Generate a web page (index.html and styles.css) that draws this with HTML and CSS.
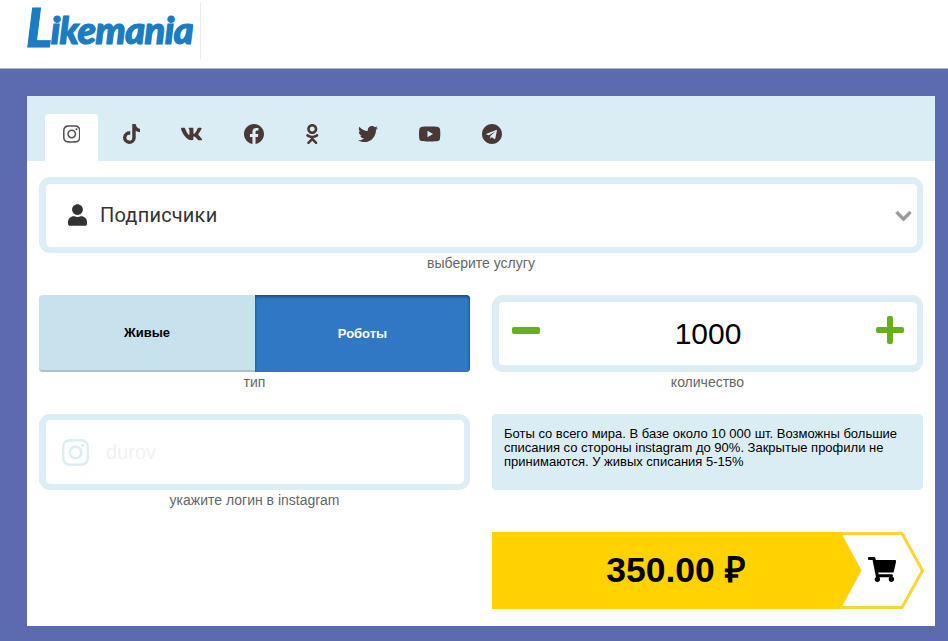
FILE: index.html
```html
<!DOCTYPE html>
<html lang="ru">
<head>
<meta charset="utf-8">
<title>Likemania</title>
<link rel="stylesheet" href="styles.css">
</head>
<body>
<header class="header">
  <div class="logo"><span class="logo-l">L</span>ikemania</div>
</header>
<main class="page">
  <section class="card">
    <nav class="tabs">
      <a class="tab tab-active"><svg class="icon" viewBox="0 0 448 512"><path d="M224.1 141c-63.6 0-114.9 51.3-114.9 114.9s51.3 114.9 114.9 114.9S339 319.5 339 255.9 287.7 141 224.1 141zm0 189.6c-41.1 0-74.7-33.5-74.7-74.7s33.5-74.7 74.7-74.7 74.7 33.5 74.7 74.7-33.6 74.7-74.7 74.7zm146.4-194.3c0 14.9-12 26.8-26.8 26.8-14.9 0-26.8-12-26.8-26.8s12-26.8 26.8-26.8 26.8 12 26.8 26.8zm76.1 27.2c-1.7-35.9-9.9-67.7-36.2-93.9-26.2-26.2-58-34.4-93.9-36.2-37-2.1-147.9-2.1-184.9 0-35.8 1.7-67.6 9.9-93.9 36.1s-34.4 58-36.2 93.9c-2.1 37-2.1 147.9 0 184.9 1.7 35.9 9.9 67.7 36.2 93.9s58 34.4 93.9 36.2c37 2.1 147.9 2.1 184.9 0 35.9-1.7 67.7-9.9 93.9-36.2 26.2-26.2 34.4-58 36.2-93.9 2.1-37 2.1-147.8 0-184.8zM398.8 388c-7.8 19.6-22.9 34.7-42.6 42.6-29.5 11.7-99.5 9-132.1 9s-102.7 2.6-132.1-9c-19.6-7.8-34.7-22.9-42.6-42.6-11.7-29.5-9-99.5-9-132.1s-2.6-102.7 9-132.1c7.8-19.6 22.9-34.7 42.6-42.6 29.5-11.7 99.5-9 132.1-9s102.7-2.6 132.1 9c19.6 7.8 34.7 22.9 42.6 42.6 11.7 29.5 9 99.5 9 132.1s2.7 102.7-9 132.1z"/></svg></a>
      <a class="tab tab-tiktok"><svg class="icon" viewBox="0 0 448 512"><path d="M448,209.91a210.06,210.06,0,0,1-122.77-39.25V349.38A162.55,162.55,0,1,1,185,188.31V278.2a74.62,74.62,0,1,0,52.23,71.18V0l88,0a121.18,121.18,0,0,0,1.86,22.17h0A122.18,122.18,0,0,0,381,102.39a121.43,121.43,0,0,0,67,20.14Z"/></svg></a>
      <a class="tab"><svg class="icon icon-vk" viewBox="18 0 536 512"><path d="M545 117.7c3.7-12.5 0-21.7-17.8-21.7h-58.9c-15 0-21.9 7.9-25.6 18.7 0 0-29.4 72.2-71 119.1-13.5 13.5-19.6 17.8-27 17.8-3.7 0-9.2-4.3-9.2-16.8V117.7c0-15-4.2-21.7-16.6-21.7h-92.6c-9.4 0-15 7-15 13.5 0 14.2 21.2 17.5 23.4 57.4v86.8c0 19-3.4 22.5-10.9 22.5-20 0-68.6-73.4-97.4-157.4-5.8-16.3-11.5-22.8-26.6-22.8H38.8c-16.8 0-20.2 7.9-20.2 16.7 0 15.6 20 93.1 93.1 195.5C160.4 378.1 229 416 291.4 416c37.5 0 42.1-8.4 42.1-22.9 0-66.8-3.4-73.1 15.4-73.1 8.7 0 23.7 4.4 58.7 38.1 40 40 46.6 57.9 69 57.9h58.9c16.8 0 25.3-8.4 20.4-25-11.2-34.9-86.9-106.7-90.3-111.5-8.7-11.2-6.2-16.2 0-26.2.1-.1 72-101.3 79.4-135.6z"/></svg></a>
      <a class="tab"><svg class="icon" viewBox="8 8 496 496"><path d="M504 256C504 119 393 8 256 8S8 119 8 256c0 123.78 90.69 226.38 209.25 245V327.69h-63V256h63v-54.64c0-62.15 37-96.48 93.67-96.48 27.14 0 55.52 4.84 55.52 4.84v61h-31.28c-30.8 0-40.41 19.12-40.41 38.73V256h68.78l-11 71.69h-57.78V501C413.31 482.38 504 379.78 504 256z"/></svg></a>
      <a class="tab tab-ok"><svg class="icon" viewBox="0 0 320 512"><path d="M275.1 334c-27.4 17.4-65.1 24.3-90 26.9l20.9 20.6 76.3 76.3c27.9 28.6-17.5 73.3-45.7 45.7-19.1-19.4-47.1-47.4-76.3-76.6L84 503.4c-28.2 27.5-73.6-17.6-45.4-45.7 19.4-19.4 47.1-47.4 76.3-76.3l20.6-20.6c-24.6-2.6-62.9-9.1-90.6-26.9-32.6-21-46.9-33.3-34.3-59 7.4-14.6 27.7-26.9 54.6-5.7 0 0 36.3 28.9 94.9 28.9s94.9-28.9 94.9-28.9c26.9-21.1 47.1-8.9 54.6 5.7 12.4 25.7-1.9 38-34.5 59.1zM30.3 129.7C30.3 58 88.6 0 160 0s129.7 58 129.7 129.7c0 71.4-58.3 129.4-129.7 129.4s-129.7-58-129.7-129.4zm66 0c0 35.1 28.6 63.7 63.7 63.7s63.7-28.6 63.7-63.7c0-35.4-28.6-64-63.7-64s-63.7 28.6-63.7 64z"/></svg></a>
      <a class="tab"><svg class="icon" viewBox="0 0 512 512"><path d="M459.37 151.716c.325 4.548.325 9.097.325 13.645 0 138.72-105.583 298.558-298.558 298.558-59.452 0-114.68-17.219-161.137-47.106 8.447.974 16.568 1.299 25.34 1.299 49.055 0 94.213-16.568 130.274-44.832-46.132-.975-84.792-31.188-98.112-72.772 6.498.974 12.995 1.624 19.818 1.624 9.421 0 18.843-1.3 27.614-3.573-48.081-9.747-84.143-51.98-84.143-102.985v-1.299c13.969 7.797 30.214 12.67 47.431 13.319-28.264-18.843-46.781-51.005-46.781-87.391 0-19.492 5.197-37.36 14.294-52.954 51.655 63.675 129.3 105.258 216.365 109.807-1.624-7.797-2.599-15.918-2.599-24.04 0-57.828 46.782-104.934 104.934-104.934 30.213 0 57.502 12.67 76.67 33.137 23.715-4.548 46.456-13.32 66.599-25.34-7.798 24.366-24.366 44.833-46.132 57.827 21.117-2.273 41.584-8.122 60.426-16.243-14.292 20.791-32.161 39.308-52.628 54.253z"/></svg></a>
      <a class="tab"><svg class="icon" viewBox="15 0 546 512"><path d="M549.655 124.083c-6.281-23.65-24.787-42.276-48.284-48.597C458.781 64 288 64 288 64S117.22 64 74.629 75.486c-23.497 6.322-42.003 24.947-48.284 48.597-11.412 42.867-11.412 132.305-11.412 132.305s0 89.438 11.412 132.305c6.281 23.65 24.787 41.5 48.284 47.821C117.22 448 288 448 288 448s170.78 0 213.371-11.486c23.497-6.321 42.003-24.171 48.284-47.821 11.412-42.867 11.412-132.305 11.412-132.305s0-89.438-11.412-132.305zm-317.51 213.508V175.185l142.739 81.205-142.739 81.201z"/></svg></a>
      <a class="tab"><svg class="icon" viewBox="0 8 496 496"><path d="M248 8C111 8 0 119 0 256s111 248 248 248 248-111 248-248S385 8 248 8zm121.8 169.9l-40.7 191.8c-3 13.6-11.1 16.9-22.4 10.5l-62-45.7-29.9 28.8c-3.3 3.3-6.1 6.1-12.5 6.1l4.4-63.1 114.9-103.8c5-4.4-1.1-6.9-7.7-2.5l-142 89.4-61.2-19.1c-13.3-4.2-13.6-13.3 2.8-19.7l239.1-92.2c11.1-4 20.8 2.7 17.2 19.5z"/></svg></a>
    </nav>
    <div class="form">
      <div class="field field-wide">
        <div class="box select">
          <svg class="icon-user" viewBox="0 0 448 512"><path d="M224 256c70.7 0 128-57.3 128-128S294.7 0 224 0 96 57.3 96 128s57.3 128 128 128zm89.6 32h-16.7c-22.2 10.2-46.9 16-72.9 16s-50.6-5.8-72.9-16h-16.7C60.2 288 0 348.2 0 422.4V464c0 26.5 21.5 48 48 48h352c26.5 0 48-21.5 48-48v-41.6c0-74.2-60.2-134.4-134.4-134.4z"/></svg>
          <span class="select-text">Подписчики</span>
          <svg class="icon-chevron" viewBox="-20 100 488 310"><path d="M207.029 381.476L12.686 187.132c-9.373-9.373-9.373-24.569 0-33.941l22.667-22.667c9.357-9.357 24.522-9.375 33.901-.04L224 284.505l154.745-154.021c9.379-9.335 24.544-9.317 33.901.04l22.667 22.667c9.373 9.373 9.373 24.569 0 33.941L240.971 381.476c-9.373 9.372-24.569 9.372-33.942 0z"/></svg>
        </div>
        <div class="hint">выберите услугу</div>
      </div>
      <div class="field">
        <div class="toggle">
          <div class="toggle-item toggle-live">Живые</div>
          <div class="toggle-item toggle-bots">Роботы</div>
        </div>
        <div class="hint">тип</div>
      </div>
      <div class="field">
        <div class="box stepper">
          <svg class="step-icon" viewBox="0 0 28 28"><rect x="0" y="11" width="28" height="7" rx="2"/></svg>
          <span class="step-value">1000</span>
          <svg class="step-icon" viewBox="0 0 28 28"><path d="M11 2a2 2 0 0 1 2-2h2a2 2 0 0 1 2 2v9h9a2 2 0 0 1 2 2v2a2 2 0 0 1-2 2h-9v9a2 2 0 0 1-2 2h-2a2 2 0 0 1-2-2v-9H2a2 2 0 0 1-2-2v-2a2 2 0 0 1 2-2h9z"/></svg>
        </div>
        <div class="hint">количество</div>
      </div>
      <div class="field">
        <div class="box login">
          <svg class="icon-login" viewBox="0 0 448 512"><path d="M224.1 141c-63.6 0-114.9 51.3-114.9 114.9s51.3 114.9 114.9 114.9S339 319.5 339 255.9 287.7 141 224.1 141zm0 189.6c-41.1 0-74.7-33.5-74.7-74.7s33.5-74.7 74.7-74.7 74.7 33.5 74.7 74.7-33.6 74.7-74.7 74.7zm146.4-194.3c0 14.9-12 26.8-26.8 26.8-14.9 0-26.8-12-26.8-26.8s12-26.8 26.8-26.8 26.8 12 26.8 26.8zm76.1 27.2c-1.7-35.9-9.9-67.7-36.2-93.9-26.2-26.2-58-34.4-93.9-36.2-37-2.1-147.9-2.1-184.9 0-35.8 1.7-67.6 9.9-93.9 36.1s-34.4 58-36.2 93.9c-2.1 37-2.1 147.9 0 184.9 1.7 35.9 9.9 67.7 36.2 93.9s58 34.4 93.9 36.2c37 2.1 147.9 2.1 184.9 0 35.9-1.7 67.7-9.9 93.9-36.2 26.2-26.2 34.4-58 36.2-93.9 2.1-37 2.1-147.8 0-184.8zM398.8 388c-7.8 19.6-22.9 34.7-42.6 42.6-29.5 11.7-99.5 9-132.1 9s-102.7 2.6-132.1-9c-19.6-7.8-34.7-22.9-42.6-42.6-11.7-29.5-9-99.5-9-132.1s-2.6-102.7 9-132.1c7.8-19.6 22.9-34.7 42.6-42.6 29.5-11.7 99.5-9 132.1-9s102.7-2.6 132.1 9c19.6 7.8 34.7 22.9 42.6 42.6 11.7 29.5 9 99.5 9 132.1s2.7 102.7-9 132.1z"/></svg>
          <span class="login-text">durov</span>
        </div>
        <div class="hint">укажите логин в instagram</div>
      </div>
      <div class="info">Боты со всего мира. В базе около 10 000 шт. Возможны большие списания со стороны instagram до 90%. Закрытые профили не принимаются. У живых списания 5-15%</div>
      <div class="buy">
        <div class="buy-price">350.00 ₽</div>
        <svg class="buy-cart" viewBox="0 0 92 77">
          <polygon class="buy-outline" points="8,1.5 70,1.5 90.5,38.5 70,75.5 8,75.5 28,38.5"/>
          <path transform="translate(36 25) scale(0.0488)" d="M528.12 301.319l47.273-208C578.806 78.301 567.391 64 551.99 64H159.208l-9.166-44.81C147.758 8.021 137.93 0 126.529 0H24C10.745 0 0 10.745 0 24v16c0 13.255 10.745 24 24 24h69.883l70.248 343.435C147.325 417.1 136 435.222 136 456c0 30.928 25.072 56 56 56s56-25.072 56-56c0-15.674-6.447-29.835-16.824-40h209.647C430.447 426.165 424 440.326 424 456c0 30.928 25.072 56 56 56s56-25.072 56-56c0-22.172-12.888-41.332-31.579-50.405l5.517-24.276c3.413-15.018-8.002-29.319-23.403-29.319H218.117l-6.545-32h293.145c11.206 0 20.92-7.754 23.403-18.681z"/>
        </svg>
      </div>
    </div>
  </section>
</main>
</body>
</html>
```

FILE: styles.css
```css
* { box-sizing: border-box; }
html, body { margin: 0; height: 100%; }
body {
  background: #5c6bb0;
  font-family: "Liberation Sans", Arial, sans-serif;
  color: #000;
}
.header {
  height: 69px;
  background: #fff;
  border-bottom: 1px solid #b5b5b8;
  padding: 2px 0 0 26px;
}
.logo {
  width: 175px;
  height: 57px;
  border-right: 1px solid #e8edf0;
  font-family: Lato, sans-serif;
  font-style: italic;
  font-weight: 900;
  font-size: 38px;
  line-height: 55px;
  letter-spacing: -0.6px;
  color: #1b7cc4;
  -webkit-text-stroke: 1px #1b7cc4;
  text-shadow: 0 0 1px #1b7cc4;
  white-space: nowrap;
}
.logo-l {
  display: inline-block;
  font-size: 54px;
  line-height: 40px;
  vertical-align: -3px;
  margin-right: -1px;
}
.page { padding: 27px 13px 15px 27px; }
.card { background: #fff; height: 530px; }
.tabs {
  display: flex;
  gap: 6px;
  height: 65px;
  padding: 18px 0 0 18px;
  background: #dbedf4;
}
.tab {
  display: flex;
  justify-content: center;
  padding: 10px 17.7px 0;
  fill: #4a3836;
}
.tab-active {
  background: #fff;
  border-radius: 4px 4px 0 0;
  fill: #555;
}
.tab-tiktok { margin-left: 1px; }
.tab-ok { margin-left: 1px; margin-right: -2px; }
.icon { display: block; height: 20px; width: auto; }
.form {
  display: grid;
  grid-template-columns: 431px 431px;
  column-gap: 22px;
  row-gap: 24px;
  padding: 16px 12px 0;
  align-items: start;
}
.field-wide { grid-column: 1 / 3; }
.box {
  display: flex;
  align-items: center;
  height: 76px;
  border: 7px solid #dcedf3;
  border-right-width: 6px;
  border-radius: 11px;
  background: #fff;
}
.hint {
  height: 18px;
  padding-top: 2px;
  font-size: 14px;
  line-height: 16px;
  color: #666;
  text-align: center;
}
.select { padding: 0 5px 1px 22px; border-bottom-width: 6px; }
.icon-user { width: 19px; height: 22px; fill: #333; margin-right: 13px; }
.select-text {
  flex: 1;
  font-family: Roboto, sans-serif;
  font-size: 20px;
  letter-spacing: .2px;
  color: #333;
}
.icon-chevron { width: 17px; height: 14px; margin-top: 1px; fill: #999; stroke: #999; stroke-width: 24; }
.toggle {
  display: flex;
  height: 77px;
  font-size: 13px;
  font-weight: 700;
}
.toggle-item { display: flex; align-items: center; justify-content: center; }
.toggle-live {
  width: 216px;
  background: #c7e2ed;
  border-bottom: 2px solid #adc3cb;
  border-radius: 4px 0 0 4px;
}
.toggle-bots {
  width: 215px;
  color: #fff;
  background: #3077c4;
  border-radius: 0 4px 4px 0;
  box-shadow: inset 0 3px 3px -1px rgba(0, 0, 0, .35), inset 2px 0 2px -1px rgba(0, 0, 0, .12), inset -2px 0 2px -1px rgba(0, 0, 0, .2);
}
.stepper {
  height: 77px;
  justify-content: space-between;
  padding: 0 13px;
}
.step-icon { width: 28px; height: 28px; fill: #66b01e; margin-top: -8px; }
.step-value { font-size: 30px; line-height: 34px; }
.login { padding: 0 0 0 16px; border-top-width: 6px; border-bottom-width: 6px; }
.icon-login { width: 27px; height: 31px; fill: #dcedf3; margin-right: 17px; }
.login-text { font-size: 20px; color: #f1f1f2; }
.info {
  height: 76px;
  padding: 13px 12px 12px;
  background: #dbedf4;
  border-radius: 4px;
  font-size: 13px;
  line-height: 14px;
}
.buy { grid-column: 2; display: flex; height: 77px; }
.buy-price {
  position: relative;
  z-index: 1;
  flex: 0 0 368px;
  background: #ffd200;
  clip-path: polygon(0 0, 348px 0, 100% 50%, 348px 100%, 0 100%);
  font-size: 35.5px;
  font-weight: 700;
  line-height: 77px;
  text-align: center;
}
.buy-cart { flex: 0 0 92px; width: 92px; height: 77px; margin-left: -28px; overflow: visible; }
.buy-outline { fill: #fff; stroke: #fdd33a; stroke-width: 3; }
```
